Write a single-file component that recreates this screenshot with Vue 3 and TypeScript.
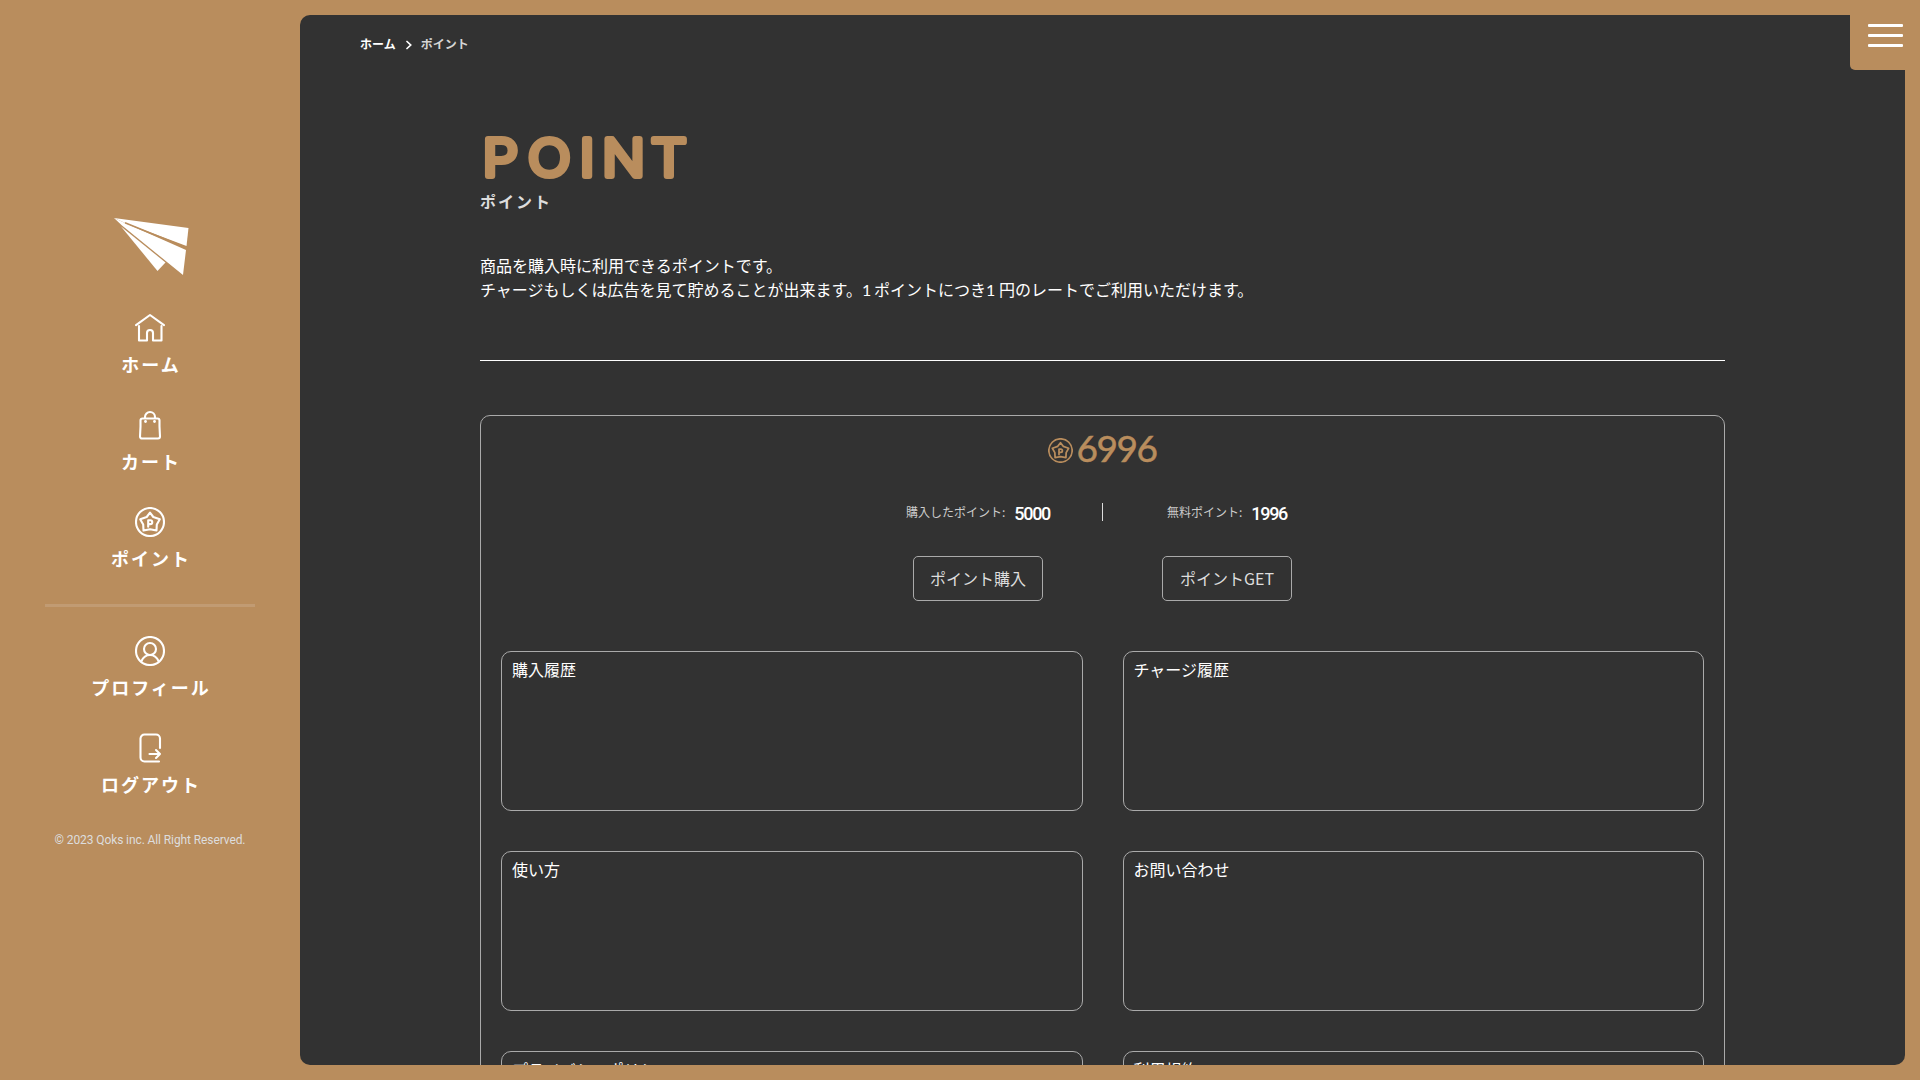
<script setup lang="ts">
interface NavItem { label: string; icon: 'home' | 'cart' | 'point' | 'profile' | 'logout' }

const primary: NavItem[] = [
  { label: 'ホーム', icon: 'home' },
  { label: 'カート', icon: 'cart' },
  { label: 'ポイント', icon: 'point' },
]
const secondary: NavItem[] = [
  { label: 'プロフィール', icon: 'profile' },
  { label: 'ログアウト', icon: 'logout' },
]
const groups: NavItem[][] = [primary, secondary]

const stats = [
  { label: '購入したポイント:', value: 5000, action: 'ポイント購入' },
  { label: '無料ポイント:', value: 1996, action: 'ポイントGET' },
]
const total: number = stats.reduce((sum, s) => sum + s.value, 0)

const panels: string[] = ['購入履歴', 'チャージ履歴', '使い方', 'お問い合わせ', 'プライバシーポリシー', '利用規約']
</script>

<template>
  <div class="app">
    <aside class="sidebar">
      <svg class="logo" viewBox="0 0 75 57">
        <path d="M0 0 74.5 10 72.500 28 10 4.500Z" />
        <path d="M0 0 10 4.500 72 32 69 57 8 7.500Z" />
        <path d="M7 8.500 51.500 44.500 43.500 53Z" />
        <path class="fold" d="M11 4.800 73 30" />
      </svg>
      <nav v-for="(group, g) in groups" :key="g" class="group">
        <a v-for="item in group" :key="item.label" class="item">
          <svg class="icon" viewBox="0 0 30 30">
            <g v-if="item.icon === 'home'">
              <path d="M1 12.200 15 2l14 10.200" />
              <path d="M4 13v14.500h8V20a3 3 0 0 1 6 0v7.500h8.500V13" />
            </g>
            <g v-else-if="item.icon === 'cart'">
              <path d="M7.500 8.500h15a2 2 0 0 1 2 2v6l.5 10a2 2 0 0 1-2 2h-16a2 2 0 0 1-2-2l.5-10v-6a2 2 0 0 1 2-2Z" />
              <path d="M10 8V7a5 5 0 0 1 10 0v1" />
              <circle class="dot" cx="10.500" cy="11.500" r="1.400" />
              <circle class="dot" cx="19.500" cy="11.500" r="1.400" />
            </g>
            <g v-else-if="item.icon === 'point'">
              <circle cx="15" cy="15" r="14" />
              <path d="m15 5.600 3.300 4.400 6.500 2.300-3 5.200-.3 6-6.500-1.200-6.500 1.200-.3-6-3-5.200 6.500-2.300Z" />
              <path d="M13.200 19.800v-6.600h2.100a1.900 1.900 0 0 1 0 3.900h-2.100" />
            </g>
            <g v-else-if="item.icon === 'profile'">
              <circle cx="15" cy="15" r="14" />
              <circle cx="15" cy="13" r="6" />
              <path d="M6.200 25.500C8 21.500 11 19 15 19s7 2.500 8.800 6.500" />
            </g>
            <g v-else>
              <path d="M25 15V5.500a4 4 0 0 0-4-4H9.500a4 4 0 0 0-4 4v19a4 4 0 0 0 4 4h14.500" />
              <path d="M14.500 21H25M21 17l4 4-4 4" />
            </g>
          </svg>
          <span class="label">{{ item.label }}</span>
        </a>
      </nav>
      <small class="copy">© 2023 Qoks inc. All Right Reserved.</small>
    </aside>

    <main class="main">
      <button class="menu" aria-label="menu"><i /><i /><i /></button>
      <div class="crumbs">
        <b>ホーム</b>
        <svg viewBox="0 0 6 10"><path d="m1 1.500 3.700 3.500-3.700 3.500" /></svg>
        <span>ポイント</span>
      </div>
      <div class="content">
        <svg class="title" viewBox="0 0 220 60">
          <text transform="scale(1.1 1)" x="2.400 43.600 90.700 111.200 155.500" y="45.500">POINT</text>
        </svg>
        <p class="subtitle">ポイント</p>
        <p class="lead">商品を購入時に利用できるポイントです。<br><span>チャージもしくは広告を見て貯めることが出来ます。</span><i class="one">1</i><span>ポイントにつき</span><i class="one b">1</i><span>円のレートでご利用いただけます。</span></p>
        <section class="card">
          <div class="total">
            <svg class="coin" viewBox="0 0 30 30">
              <circle cx="15" cy="15" r="14" />
              <path d="m15 5.600 3.300 4.400 6.500 2.300-3 5.200-.3 6-6.500-1.200-6.500 1.200-.3-6-3-5.200 6.500-2.300Z" />
              <path d="M13.200 19.800v-6.600h2.100a1.900 1.900 0 0 1 0 3.900h-2.100" />
            </svg>
            <span>{{ total }}</span>
          </div>
          <div class="stats">
            <div v-for="s in stats" :key="s.label" class="stat">
              <p class="amount"><span>{{ s.label }}</span><b>{{ s.value }}</b></p>
              <button class="action">{{ s.action }}</button>
            </div>
          </div>
          <div class="panels">
            <div v-for="p in panels" :key="p" class="panel">{{ p }}</div>
          </div>
        </section>
      </div>
    </main>
  </div>
</template>

<style>
body { margin: 0; overflow: hidden; }
</style>

<style scoped>
* { box-sizing: border-box; }
p { margin: 0; }
button { font: inherit; color: inherit; background: none; padding: 0; }
.app {
  display: flex; width: 1920px; height: 1080px; padding: 15px 15px 15px 0; overflow: hidden;
  background: #b98d5d; color: #fff;
  font-family: "Noto Sans CJK JP", sans-serif; font-size: 16px;
}
.sidebar { width: 300px; flex: none; display: flex; flex-direction: column; align-items: center; padding-top: 203px; }
.logo { width: 75px; height: 57px; margin: 0 0 38px 3px; fill: #fff; }
.fold { fill: none; stroke: #b98d5d; stroke-width: 1.5; }
.group { display: flex; flex-direction: column; align-items: center; gap: 32px; width: 210px; }
.group + .group { border-top: 3px solid #c19b73; margin-top: 32px; padding-top: 29px; }
.item { display: flex; flex-direction: column; align-items: center; gap: 8px; height: 65px; }
.icon { width: 30px; height: 30px; flex: none; }
.icon, .coin { fill: none; stroke: #fff; stroke-width: 2.1; stroke-linejoin: round; stroke-linecap: round; }
.dot { fill: #fff; stroke: none; }
.label { height: 26px; line-height: 26px; font-size: 18px; font-weight: 700; letter-spacing: 2px; margin-right: -2px; white-space: nowrap; }
.copy { margin-top: 32px; font: 12px/20px Roboto, sans-serif; letter-spacing: -.1px; color: #ddd; white-space: nowrap; }

.main { position: relative; flex: 1; height: 1050px; background: #323232; border-radius: 10px 0 10px 10px; overflow: hidden; }
.menu {
  position: absolute; top: 0; right: 0; width: 55px; height: 55px; border: 0; border-radius: 0 0 0 5px;
  background: #b98d5d; display: flex; flex-direction: column; gap: 7px; padding: 9px 0 0 18px;
}
.menu i { width: 35px; height: 3px; border-radius: 1px; background: #fff; }
.crumbs { display: flex; align-items: center; height: 20px; margin: 19px 0 0 60px; font-size: 12px; line-height: 20px; }
.crumbs b { font-weight: 700; }
.crumbs svg { width: 6px; height: 10px; margin: 1px 9px 0 10px; fill: none; stroke: #fff; stroke-width: 1.7; stroke-linecap: round; }
.crumbs span { color: #d5d5d5; font-weight: 700; }
.content { padding: 76px 180px 0; }
.title { display: block; width: 220px; height: 60px; overflow: visible; }
.title text { font: 300 51px Inter, sans-serif; fill: #b98d5d; stroke: #b98d5d; stroke-width: 5.800; stroke-linejoin: round; stroke-linecap: round; }
.subtitle { height: 24px; margin-top: -1px; line-height: 24px; font-weight: 700; letter-spacing: 2px; color: #ddd; }
.lead { height: 108px; margin-top: 40px; line-height: 24px; border-bottom: 1px solid #fff; white-space: nowrap; }
.one { display: inline-block; width: 12px; font: 16px/20px Lato, sans-serif; }
.one.b { width: 13px; }
.card { height: 900px; margin-top: 54px; border: 1px solid #aaa; border-radius: 10px; padding: 0 20px; }
.total { display: flex; justify-content: center; align-items: center; height: 66px; gap: 4px; color: #b98d5d; font: 400 37px/64px Lato, sans-serif; letter-spacing: -1.500px; }
.total span { height: 66px; margin-right: 1px; -webkit-text-stroke: .5px #b98d5d; }
.coin { width: 25px; height: 25px; margin-top: 3px; stroke: #b98d5d; }
.stats { display: flex; justify-content: center; margin-top: 20px; position: relative; }
.stats::before { content: ""; position: absolute; left: calc(50% - 1px); top: 1px; width: 1px; height: 18px; background: #ddd; }
.stat { width: 249px; display: flex; flex-direction: column; align-items: center; }
.amount { display: flex; align-items: center; height: 22px; gap: 9px; font-size: 12px; line-height: 20px; color: #ccc; white-space: nowrap; }
.amount span { height: 22px; }
.amount b { color: #fff; font: 500 18px/22px Roboto, sans-serif; letter-spacing: -1.300px; padding-top: 1px; }
.action { width: 130px; height: 45px; margin-top: 32px; border: 1px solid #aaa; border-radius: 5px; padding-bottom: 2px; color: #ddd; white-space: nowrap; }
.panels { display: grid; grid-template-columns: 1fr 1fr; gap: 40px; margin-top: 50px; }
.panel { height: 160px; border: 1px solid #aaa; border-radius: 10px; padding: 5px 10px; line-height: 24px; }
</style>
